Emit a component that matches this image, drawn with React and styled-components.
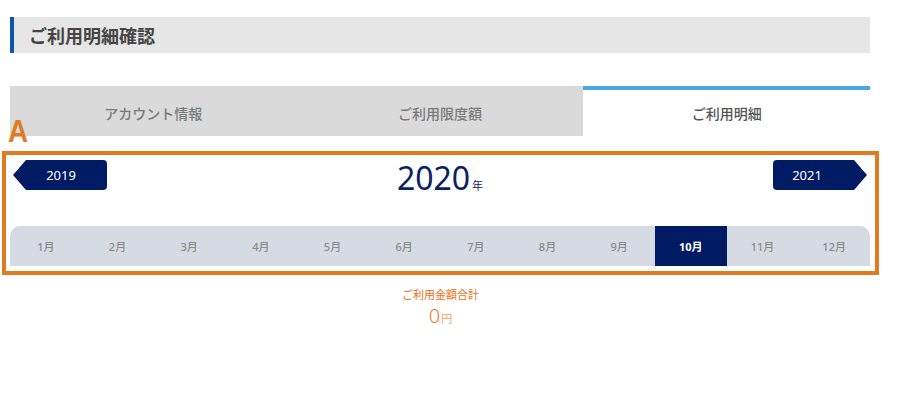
import React, { useState } from "react";
import styled, { createGlobalStyle } from "styled-components";

const GlobalStyle = createGlobalStyle`
  body {
    margin: 0;
    background: #fff;
    font-family: "Noto Sans", "Noto Sans CJK JP", sans-serif;
  }
`;

const months = ["1月", "2月", "3月", "4月", "5月", "6月", "7月", "8月", "9月", "10月", "11月", "12月"];
const tabs = ["アカウント情報", "ご利用限度額", "ご利用明細"];

export default function App() {
  const [activeTab, setActiveTab] = useState(2);
  const [activeMonth, setActiveMonth] = useState(9);

  return (
    <Page>
      <GlobalStyle />
      <PageTitle>ご利用明細確認</PageTitle>
      <TabBar>
        {tabs.map((t, i) => (
          <Tab key={t} $active={i === activeTab} onClick={() => setActiveTab(i)}>
            {t}
          </Tab>
        ))}
      </TabBar>
      <Marked>
        <MarkLabel>A</MarkLabel>
        <YearRow>
          <YearButton $dir="prev">2019</YearButton>
          <YearText>
            2020<small>年</small>
          </YearText>
          <YearButton $dir="next">2021</YearButton>
        </YearRow>
        <MonthBar>
          {months.map((m, i) => (
            <Month key={m} $active={i === activeMonth} onClick={() => setActiveMonth(i)}>
              {m}
            </Month>
          ))}
        </MonthBar>
      </Marked>
      <Total>
        <TotalLabel>ご利用金額合計</TotalLabel>
        <TotalValue>
          0<small>円</small>
        </TotalValue>
      </Total>
    </Page>
  );
}

const Page = styled.div`
  width: 860px;
  margin-left: 10px;
  padding-top: 17px;
`;

const PageTitle = styled.h1`
  margin: 0;
  height: 36px;
  display: flex;
  align-items: center;
  padding-left: 15px;
  background: #e6e6e6;
  border-left: 4px solid #0b56a8;
  font-family: "Noto Sans CJK JP", sans-serif;
  font-size: 18px;
  font-weight: 700;
  color: #444;
`;

const TabBar = styled.div`
  margin-top: 33px;
  display: grid;
  grid-template-columns: repeat(3, 1fr);
  height: 50px;
`;

const Tab = styled.div`
  display: flex;
  align-items: center;
  justify-content: center;
  font-family: "Noto Sans CJK JP", sans-serif;
  font-size: 14px;
  font-weight: 500;
  cursor: pointer;
  box-sizing: border-box;
  background: ${(p) => (p.$active ? "#fff" : "#dadada")};
  color: ${(p) => (p.$active ? "#555" : "#7a7a7a")};
  border-top: 4px solid ${(p) => (p.$active ? "#4aa9e1" : "#dadada")};
`;

const Marked = styled.div`
  position: relative;
  margin: 15px -9px 0 -8px;
  border: 4px solid #e07c1f;
  padding: 5px 0 5px;
`;

const MarkLabel = styled.span`
  position: absolute;
  left: 2px;
  top: -39px;
  font-family: "Liberation Sans", sans-serif;
  font-size: 31px;
  font-weight: 700;
  line-height: 1;
  color: #e07c1f;
  transform: scaleX(0.9);
  transform-origin: left;
`;

const YearRow = styled.div`
  display: flex;
  align-items: center;
  justify-content: space-between;
  padding: 0 8px 0 7px;
  height: 30px;
`;

const YearButton = styled.button`
  width: 94px;
  height: 30px;
  border: none;
  border-radius: 4px;
  background: #001b63;
  color: #fff;
  font-family: "Noto Sans", sans-serif;
  font-size: 13px;
  cursor: pointer;
  clip-path: ${(p) =>
    p.$dir === "prev"
      ? "polygon(13px 0, 100% 0, 100% 100%, 13px 100%, 0 50%)"
      : "polygon(0 0, calc(100% - 13px) 0, 100% 50%, calc(100% - 13px) 100%, 0 100%)"};
  padding: ${(p) => (p.$dir === "prev" ? "0 0 0 2px" : "0 26px 0 0")};
`;

const YearText = styled.div`
  font-family: "Noto Sans", sans-serif;
  font-size: 32px;
  line-height: 1;
  color: #0c2164;
  margin-top: 6px;

  small {
    font-family: "Noto Sans CJK JP", sans-serif;
    font-size: 11px;
    margin-left: 2px;
  }
`;

const MonthBar = styled.div`
  margin: 36px 5px 0 4px;
  display: grid;
  grid-template-columns: repeat(12, 1fr);
  height: 40px;
  background: #d5dae3;
  border-radius: 10px 10px 0 0;
  overflow: hidden;
`;

const Month = styled.div`
  display: flex;
  align-items: center;
  justify-content: center;
  font-family: "Noto Sans", "Noto Sans CJK JP", sans-serif;
  font-size: 11px;
  font-weight: ${(p) => (p.$active ? 700 : 500)};
  cursor: pointer;
  background: ${(p) => (p.$active ? "#001b63" : "transparent")};
  color: ${(p) => (p.$active ? "#fff" : "#8a8a8a")};
`;

const Total = styled.div`
  display: flex;
  flex-direction: column;
  align-items: center;
  padding-top: 11px;
  margin-left: 1px;
`;

const TotalLabel = styled.div`
  font-family: "Noto Sans CJK JP", sans-serif;
  font-size: 11px;
  color: #f26d14;
`;

const TotalValue = styled.div`
  margin-top: 4px;
  font-family: "Noto Sans", sans-serif;
  font-size: 20px;
  font-weight: 300;
  line-height: 1;
  color: #f27a1e;

  small {
    font-family: "Noto Sans CJK JP", sans-serif;
    font-size: 11px;
    margin-left: 1px;
  }
`;
